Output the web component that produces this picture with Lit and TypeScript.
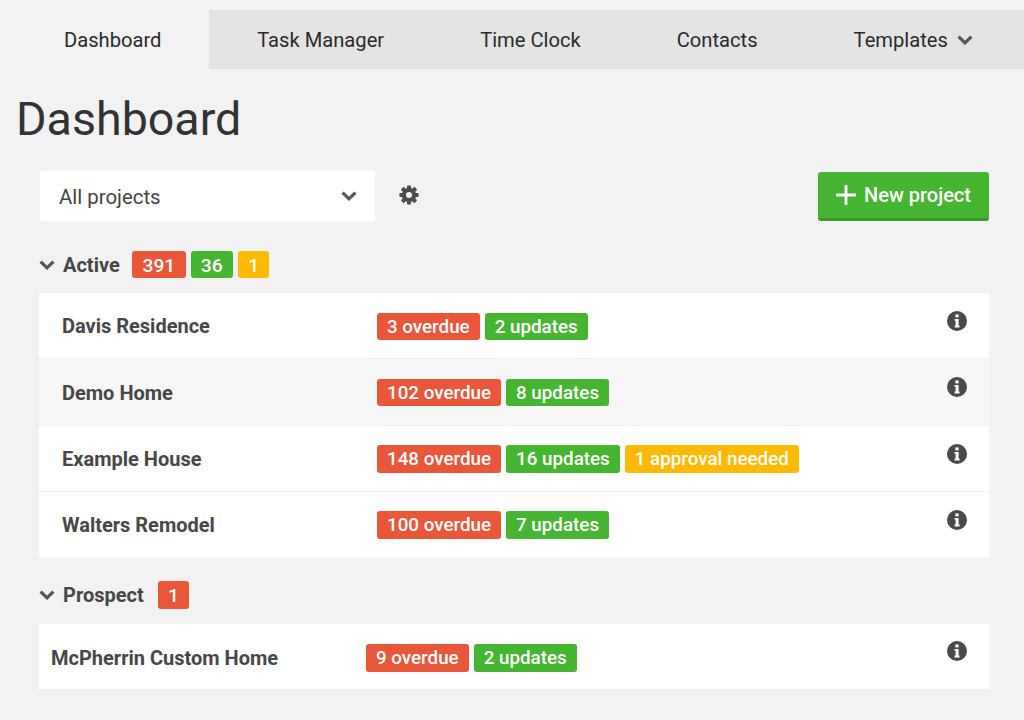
import { LitElement, html, css, svg } from "lit";
import { customElement } from "lit/decorators.js";

const chevron = (cls: string) => html`<svg class=${cls} viewBox="0 0 16 10"><path d="M1.6 1.6l6.4 6.2 6.4-6.2" fill="none" stroke="currentColor" stroke-width="3.2"/></svg>`;
const gearTeeth = [0, 45, 90, 135].map((a) => svg`<rect x="8" y="0.4" width="4" height="19.2" rx="0.8" transform="rotate(${a} 10 10)"/>`);
const gear = html`<svg class="gear" viewBox="0 0 20 20"><g fill="#4d4d4d">${gearTeeth}<circle cx="10" cy="10" r="7.2"/></g><circle cx="10" cy="10" r="3" fill="#f2f2f2"/></svg>`;
const info = html`<svg class="info" viewBox="0 0 20 20"><circle cx="10" cy="10" r="10" fill="#4a4a4a"/><rect x="8.4" y="3.4" width="3.2" height="3" fill="#fff"/><path d="M7.6 8h4v6.6h1v1.8H7.6v-1.8h1V9.8h-1z" fill="#fff"/></svg>`;

interface Row { name: string; tags: [string, string][]; }
const active: Row[] = [
  { name: "Davis Residence", tags: [["r", "3 overdue"], ["g", "2 updates"]] },
  { name: "Demo Home", tags: [["r", "102 overdue"], ["g", "8 updates"]] },
  { name: "Example House", tags: [["r", "148 overdue"], ["g", "16 updates"], ["y", "1 approval needed"]] },
  { name: "Walters Remodel", tags: [["r", "100 overdue"], ["g", "7 updates"]] },
];
const prospect: Row[] = [{ name: "McPherrin Custom Home", tags: [["r", "9 overdue"], ["g", "2 updates"]] }];

@customElement("app-root")
export class AppRoot extends LitElement {
  static styles = css`
    :host { display: block; height: 720px; background: #f2f2f2; font-family: Roboto, sans-serif; color: #444; overflow: hidden; padding-top: 10px; box-sizing: border-box; }
    nav { display: flex; margin-left: 16px; height: 59px; background: #e4e4e4; font-size: 20.16px; color: #2b2b2b; }
    .tab { padding: 0 48px; display: flex; align-items: center; gap: 9px; white-space: nowrap; }
    .tab.on { background: #f2f2f2; padding-right: 47.7px; }
    .chev-nav { width: 16px; height: 10px; color: #555; }
    h1 { margin: 21px 0 0 16px; font-size: 46.6px; line-height: 58px; font-weight: 400; color: #333; }
    .tools { display: flex; align-items: center; margin: 23px 35px 0 40px; height: 50px; }
    .select { width: 335px; height: 50px; box-sizing: border-box; background: #fff; display: flex; align-items: center; justify-content: space-between; padding: 2px 18px 0 19px; font-size: 20.4px; color: #444; border-radius: 2px; }
    .chev-sel { width: 16px; height: 10px; color: #555; margin-top: -2px; }
    .gear { width: 20px; height: 20px; margin: -2px 0 0 24px; }
    .btn { margin-left: auto; width: 171px; height: 49px; box-sizing: border-box; background: #46b531; border-bottom: 3px solid #3a9629; border-radius: 3px; color: #fff; font-size: 20px; font-weight: 500; display: flex; align-items: center; justify-content: center; gap: 8px; }
    .btn svg { width: 20px; height: 20px; }
    .group { display: flex; align-items: center; margin: 29.5px 35px 0 39px; height: 28px; font-size: 20px; font-weight: 700; color: #474747; }
    .group.second { margin-top: 24px; }
    .chev-group { width: 16px; height: 10px; color: #555; margin-right: 8px; }
    .group span.t { margin-right: 12.5px; }
    .group.second span.t { margin-right: 14px; }
    .group .tag { margin-right: 5px; font-size: 19.2px; padding: 0 10.3px; }
    .list { margin: 14.5px 35px 0 39px; background: #fff; }
    .second + .list { margin-top: 15px; }
    .row { height: 65.3px; display: flex; border-bottom: 1px solid #f0f0f0; padding-left: 23px; position: relative; align-items: flex-start; }
    .row:last-child { border-bottom: 0; }
    .row.alt { background: #f7f7f7; }
    .row.tight { padding-left: 12px; }
    .name { width: 315px; font-size: 20px; font-weight: 700; color: #474747; line-height: 24px; padding-top: 21.3px; white-space: nowrap; }
    .tags { display: flex; gap: 5px; padding-top: 19.5px; }
    .tag { background: #e8573a; color: #fff; font-size: 18.8px; font-weight: 500; height: 27.5px; line-height: 29px; padding: 0 10px; border-radius: 3px; white-space: nowrap; }
    .tag.g { background: #46b531; }
    .tag.y { background: #ffb900; }
    .info { width: 20px; height: 20px; position: absolute; right: 22px; top: 18px; }
    .tight .name { padding-top: 22px; }
    .tight .tags { padding-top: 20px; }
    .tight .info { top: 17px; }
  `;

  private row(r: Row, i: number, tight = false) {
    return html`<div class="row ${i === 1 ? "alt" : ""} ${tight ? "tight" : ""}">
      <div class="name">${r.name}</div>
      <div class="tags">${r.tags.map(([c, t]) => html`<span class="tag ${c}">${t}</span>`)}</div>
      ${info}
    </div>`;
  }

  render() {
    return html`
      <nav>
        <div class="tab on">Dashboard</div>
        <div class="tab">Task Manager</div>
        <div class="tab">Time Clock</div>
        <div class="tab">Contacts</div>
        <div class="tab">Templates ${chevron("chev-nav")}</div>
      </nav>
      <h1>Dashboard</h1>
      <div class="tools">
        <div class="select">All projects ${chevron("chev-sel")}</div>
        ${gear}
        <div class="btn"><svg viewBox="0 0 20 20"><path d="M8.6 0h2.8v8.6H20v2.8h-8.6V20H8.6v-8.6H0V8.6h8.6z" fill="#fff"/></svg>New project</div>
      </div>
      <div class="group">${chevron("chev-group")}<span class="t">Active</span><span class="tag">391</span><span class="tag g">36</span><span class="tag y">1</span></div>
      <div class="list">${active.map((r, i) => this.row(r, i))}</div>
      <div class="group second">${chevron("chev-group")}<span class="t">Prospect</span><span class="tag">1</span></div>
      <div class="list">${prospect.map((r, i) => this.row(r, i, true))}</div>
    `;
  }
}
